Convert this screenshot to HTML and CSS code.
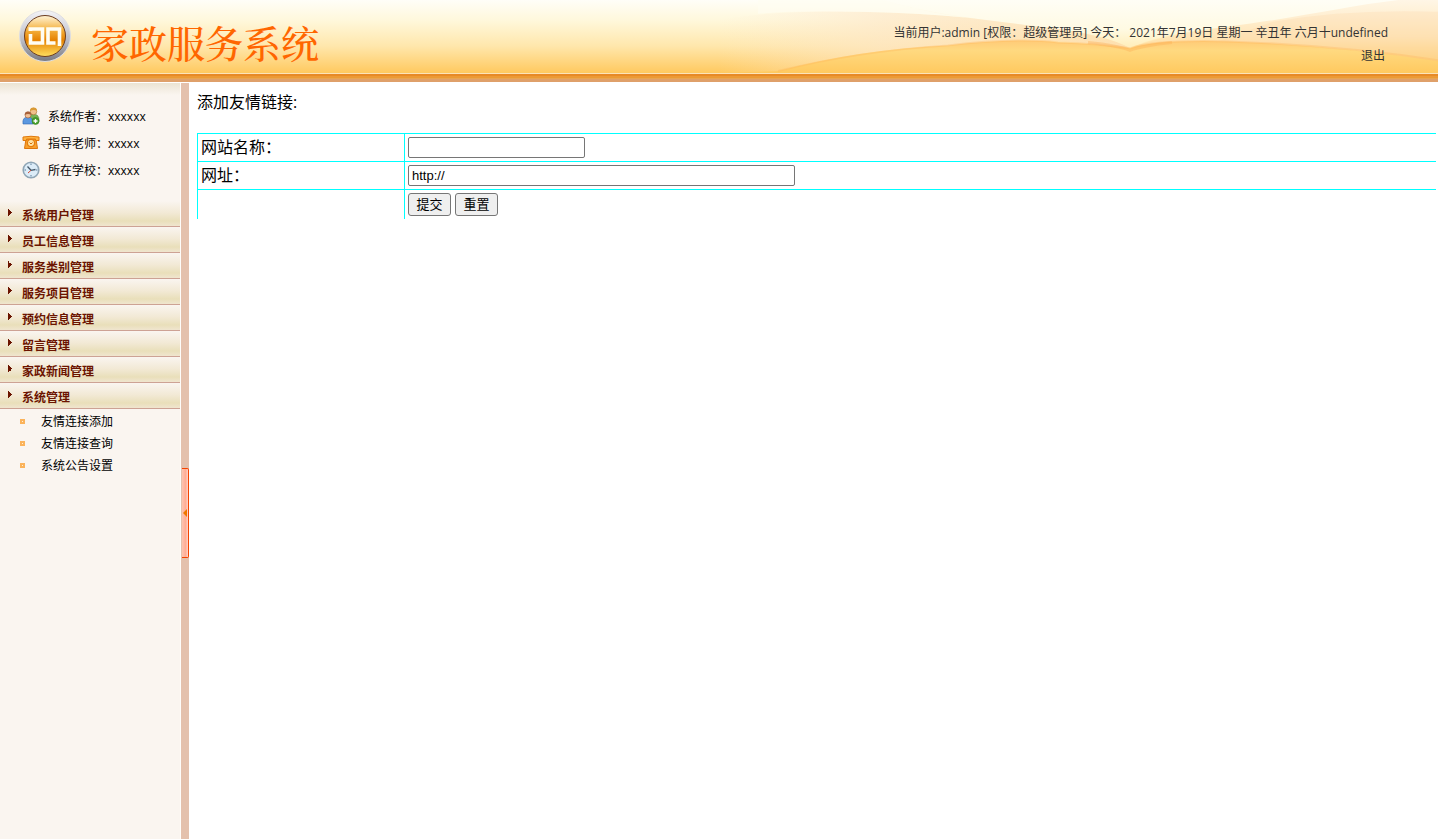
FILE: index.html
```html
<!DOCTYPE html>
<html lang="zh-CN">
<head>
    <meta charset="UTF-8">
    <title>家政服务系统</title>
    <link rel="stylesheet" href="styles.css">
</head>
<body>
    <header class="top">
        <svg class="top-waves" viewBox="0 0 740 74" preserveAspectRatio="none" aria-hidden="true">
            <defs>
                <linearGradient id="hill" x1="0" y1="0" x2="0" y2="1">
                    <stop offset="0" stop-color="#fff6e6"/>
                    <stop offset=".5" stop-color="#ffe6b8"/>
                    <stop offset="1" stop-color="#ffc95f"/>
                </linearGradient>
                <linearGradient id="ground" x1="0" y1="0" x2="0" y2="1">
                    <stop offset="0" stop-color="#ffcb78"/>
                    <stop offset=".3" stop-color="#ffd980"/>
                    <stop offset="1" stop-color="#ffc95f"/>
                </linearGradient>
                <linearGradient id="sky" x1="0" y1="0" x2="0" y2="1">
                    <stop offset="0" stop-color="#fffef6"/>
                    <stop offset=".6" stop-color="#fffae3"/>
                    <stop offset="1" stop-color="#ffedb8"/>
                </linearGradient>
                <linearGradient id="fade" x1="0" y1="0" x2="1" y2="0">
                    <stop offset="0" stop-color="#fdead0" stop-opacity="0"/>
                    <stop offset=".4" stop-color="#fde6c8" stop-opacity=".6"/>
                    <stop offset="1" stop-color="#fddcae" stop-opacity=".7"/>
                </linearGradient>
            </defs>
            <path d="M185 0C240 16 300 22 350 28Q410 36 432 49Q460 34 530 27C600 20 650 6 700 0Z" fill="url(#sky)"/>
            <path d="M20 20Q80 10 160 12Q220 13 270 18Q310 23 350 28Q410 36 432 49Q330 34 250 47Q160 56 80 72L20 74Z" fill="url(#fade)"/>
            <path d="M185 0C220 10 240 14 270 18Q220 13 160 12Q100 10 60 14L60 0Z" fill="#fffdf2" opacity=".6"/>
            <path d="M432 49Q460 36 530 27C600 18 650 6 700 0H740V74H432Z" fill="url(#hill)"/>
            <path d="M575 22Q650 9 740 12V62Q640 45 520 42Z" fill="#fcd3a4" opacity=".25"/>
            <path d="M80 72Q160 50 250 46Q320 38 360 43Q400 44 432 49Q458 40 530 42Q640 46 740 62V74H76Z" fill="url(#ground)"/>
            <path d="M80 72Q160 52 250 46Q320 38 360 43Q400 44 432 49Q458 40 530 42Q640 46 740 61" fill="none" stroke="#ffb65c" stroke-width="2" stroke-opacity=".35"/>
            <path d="M390 43Q420 46 432 51Q445 46 474 43" fill="none" stroke="#fcae55" stroke-width="3" stroke-opacity=".4"/>
        </svg>
        <div class="brand">
            <svg class="logo" viewBox="0 0 54 54" aria-hidden="true">
                <defs>
                    <linearGradient id="ring" x1="0" y1="0" x2="0" y2="1">
                        <stop offset="0" stop-color="#f4f4f8"/>
                        <stop offset=".6" stop-color="#b9bac3"/>
                        <stop offset="1" stop-color="#77787f"/>
                    </linearGradient>
                    <linearGradient id="disc" x1="0" y1="0" x2="0" y2="1">
                        <stop offset="0" stop-color="#fff4d8"/>
                        <stop offset=".35" stop-color="#f4b13e"/>
                        <stop offset=".6" stop-color="#e68200"/>
                        <stop offset="1" stop-color="#ffe060"/>
                    </linearGradient>
                </defs>
                <circle cx="27" cy="27" r="25.5" fill="url(#ring)" stroke="#dedee2"/>
                <circle cx="27" cy="27" r="20.5" fill="url(#disc)" stroke="#6b3c20"/>
                <path d="M12.500 20V22M12.500 25V34H24.500V20H10.500" fill="none" stroke="#fffdf2" stroke-width="3.600"/>
                <path d="M41.500 37V20H30V34H37.500" fill="none" stroke="#fffdf2" stroke-width="3.600"/>
            </svg>
            <h1 class="brand-name">家政服务系统</h1>
        </div>
        <div class="top-info">
            <p>当前用户:admin [权限：超级管理员] 今天： 2021年7月19日 星期一 辛丑年 六月十undefined</p>
            <a class="logout" href="#">退出</a>
        </div>
    </header>

    <div class="wrapper">
        <aside class="sidebar">
            <ul class="about">
                <li>
                    <svg class="about-icon" viewBox="0 0 18 18" aria-hidden="true">
                        <path d="M7 15Q6 7 11 7Q17 7 17 13V15Z" fill="#77b255" stroke="#4d8a35" stroke-width=".6"/>
                        <circle cx="11.500" cy="4.500" r="3.300" fill="#f0c08c" stroke="#a87032" stroke-width=".6"/>
                        <path d="M8 4Q8 .6 11.500 .6T15 4Q12 2 8 4Z" fill="#d99a35"/>
                        <path d="M1 17Q0 10 6 10Q11 10 11 17Z" fill="#5b98e0" stroke="#2f66b0" stroke-width=".6"/>
                        <circle cx="6" cy="8" r="3" fill="#f2c196" stroke="#9c5530" stroke-width=".6"/>
                        <path d="M2.800 8Q2.500 4.500 6 4.500T9.200 8Q6 6 2.800 8Z" fill="#a8623b"/>
                        <circle cx="13.500" cy="14" r="3.500" fill="#4aa12d" stroke="#2d7a1b" stroke-width=".5"/>
                        <path d="M13.500 12V16M11.500 14H15.500" stroke="#fff" stroke-width="1.300"/>
                    </svg>
                    <span>系统作者：xxxxxx</span>
                </li>
                <li>
                    <svg class="about-icon" viewBox="0 0 18 18" aria-hidden="true">
                        <path d="M4 5H14L15.500 14.500H2.500Z" fill="#f8a02c" stroke="#dd750c"/>
                        <path d="M1 6.500V3Q9 1.500 17 3V6.500H13.500V5H4.500V6.500Z" fill="#ffb23e" stroke="#e0780c"/>
                        <circle cx="9" cy="9" r="3.600" fill="#ffe2a5" stroke="#e67c0c" stroke-width="1.300"/>
                        <path d="M7.500 8.500L9 10L10.500 8.500" fill="none" stroke="#d66b00"/>
                    </svg>
                    <span>指导老师：xxxxx</span>
                </li>
                <li>
                    <svg class="about-icon" viewBox="0 0 18 18" aria-hidden="true">
                        <circle cx="9" cy="9" r="7.800" fill="#dcecf8" stroke="#8fa5b5" stroke-width="1.600"/>
                        <path d="M9 2.500V4M9 14V15.500M2.500 9H4M14 9H15.500" stroke="#5b7d9a"/>
                        <path d="M5.500 5.500L9 9.300L13.500 8.500" fill="none" stroke="#45596b" stroke-width="1.300"/>
                        <path d="M9 9.300L6 12" stroke="#d64a35"/>
                    </svg>
                    <span>所在学校：xxxxx</span>
                </li>
            </ul>

            <nav class="menu">
                <a class="menu-title" href="#">系统用户管理</a>
                <a class="menu-title" href="#">员工信息管理</a>
                <a class="menu-title" href="#">服务类别管理</a>
                <a class="menu-title" href="#">服务项目管理</a>
                <a class="menu-title" href="#">预约信息管理</a>
                <a class="menu-title" href="#">留言管理</a>
                <a class="menu-title" href="#">家政新闻管理</a>
                <a class="menu-title" href="#">系统管理</a>
                <ul class="submenu">
                    <li><a href="#">友情连接添加</a></li>
                    <li><a href="#">友情连接查询</a></li>
                    <li><a href="#">系统公告设置</a></li>
                </ul>
            </nav>
        </aside>

        <div class="splitter">
            <button class="splitter-btn" type="button" aria-label="收起菜单">
                <svg class="splitter-arrow" viewBox="0 0 4 8" aria-hidden="true"><path d="M4 0V8L0 4Z" fill="#ee7700"/></svg>
            </button>
        </div>

        <main class="content">
            <p class="content-title">添加友情链接:</p>
            <form>
                <table class="form-table">
                    <tr>
                        <td class="label-cell"><label for="siteName">网站名称：</label></td>
                        <td><input class="field" type="text" id="siteName"></td>
                    </tr>
                    <tr>
                        <td class="label-cell"><label for="siteUrl">网址：</label></td>
                        <td><input class="field field-wide" type="text" id="siteUrl" value="http://"></td>
                    </tr>
                    <tr>
                        <td class="label-cell"></td>
                        <td>
                            <div class="actions">
                                <button class="btn" type="submit">提交</button>
                                <button class="btn" type="reset">重置</button>
                            </div>
                        </td>
                    </tr>
                </table>
            </form>
        </main>
    </div>
</body>
</html>
```
FILE: styles.css
```css
* {
    box-sizing: border-box;
}

body {
    margin: 0;
    min-height: 100vh;
    display: flex;
    flex-direction: column;
    background-color: white;
    color: black;
    font-family: "Open Sans", "Noto Sans CJK SC", sans-serif;
    font-size: 12px;
}

h1, p, ul {
    margin: 0;
    padding: 0;
}

ul {
    list-style: none;
}

a {
    color: inherit;
    text-decoration: none;
}

/* header */
.top {
    position: relative;
    display: flex;
    justify-content: space-between;
    height: 82px;
    padding: 0 50px 0 18px;
    background:
        linear-gradient(#fbe3b9 0 1px, #e78a27 1px 3px, #ec9a35 3px 5px, #e9a550 5px 6px, #dfa06a 6px) bottom / 100% 9px no-repeat,
        linear-gradient(#fffef8, #fff8dc 20px, #ffe7ac 46px, #ffc95f 73px);
}

.top-waves {
    position: absolute;
    top: 0;
    right: 0;
    width: 740px;
    height: 73px;
}

.brand {
    display: flex;
    gap: 19px;
    padding-top: 9px;
}

.logo {
    width: 54px;
    height: 54px;
}

.brand-name {
    padding-top: 5px;
    color: #ff6600;
    font-family: "Noto Serif CJK SC", "Noto Sans CJK SC", serif;
    font-size: 38px;
    font-weight: 500;
    line-height: 56px;
}

.top-info {
    position: relative;
    padding-top: 21px;
    color: #333;
    line-height: 23px;
    text-align: right;
}

.logout {
    margin-right: 3px;
}

.wrapper {
    flex: 1;
    display: flex;
    padding-top: 1px;
}

/* left menu */
.sidebar {
    width: 181px;
    flex-shrink: 0;
    border-right: 1px solid #fffdfa;
    background: linear-gradient(#ebe3d3, #faf5f0 12px);
}

.about {
    padding: 19px 0 18px 22px;
}

.about li {
    display: flex;
    align-items: center;
    gap: 8px;
    height: 27px;
}

.about-icon {
    width: 18px;
    height: 18px;
}

.menu-title {
    display: block;
    height: 26px;
    padding-left: 22px;
    border-bottom: 1px solid #cda294;
    background:
        linear-gradient(to bottom right, #6b1400 50%, transparent 50%) 8px 12px / 4px 4px no-repeat,
        linear-gradient(to top right, #6b1400 50%, transparent 50%) 8px 8px / 4px 4px no-repeat,
        linear-gradient(#faf5f0, #f2e9d5 12px, #e9dfba 20px, #f0e5cf);
    color: #6b1400;
    font-weight: bold;
    line-height: 30px;
}

.submenu {
    padding-top: 1px;
}

.submenu li {
    display: flex;
    align-items: center;
    gap: 16px;
    height: 22px;
    padding-left: 20px;
}

.submenu li::before {
    content: "";
    width: 1px;
    height: 1px;
    border: 2px solid #fbb35b;
    background-color: #fff0d8;
}

/* bar between menu and content */
.splitter {
    width: 8px;
    flex-shrink: 0;
    padding: 385px 0 0 1px;
    background-color: #e4c1ad;
}

.splitter-btn {
    display: flex;
    align-items: center;
    justify-content: center;
    width: 7px;
    height: 90px;
    padding: 0;
    border: 1px solid #f54400;
    border-left: none;
    border-radius: 0 2px 2px 0;
    background: linear-gradient(to right, #ffc4b0, #ffad95 60%, #ffd5c8);
    cursor: pointer;
}

.splitter-arrow {
    width: 4px;
    height: 8px;
}

/* content */
.content {
    flex: 1;
    padding: 7px 2px 8px 8px;
    font-size: 16px;
}

.content-title {
    margin-bottom: 19px;
    line-height: 24px;
}

.form-table {
    width: 100%;
    border-collapse: separate;
    border-spacing: 0;
}

.form-table td {
    height: 28px;
    padding: 3px;
    border-top: 1px solid aqua;
    border-left: 1px solid aqua;
    line-height: 21px;
}

.form-table .label-cell {
    width: 207px;
}

.form-table label,
.field {
    display: block;
}

.field {
    width: 177px;
    height: 21px;
    padding: 1px 3px;
    border: 1px solid #767676;
    border-radius: 2px;
    font-family: "Liberation Sans", Arial, sans-serif;
    font-size: 13px;
}

.field-wide {
    width: 387px;
}

.actions {
    display: flex;
    gap: 4px;
}

.btn {
    width: 43px;
    height: 23px;
    padding: 0;
    border: 1px solid #767676;
    border-radius: 3px;
    background-color: #efefef;
    color: black;
    font-family: "Liberation Sans", "Noto Sans CJK SC", sans-serif;
    font-size: 13px;
    line-height: 20px;
}
```
